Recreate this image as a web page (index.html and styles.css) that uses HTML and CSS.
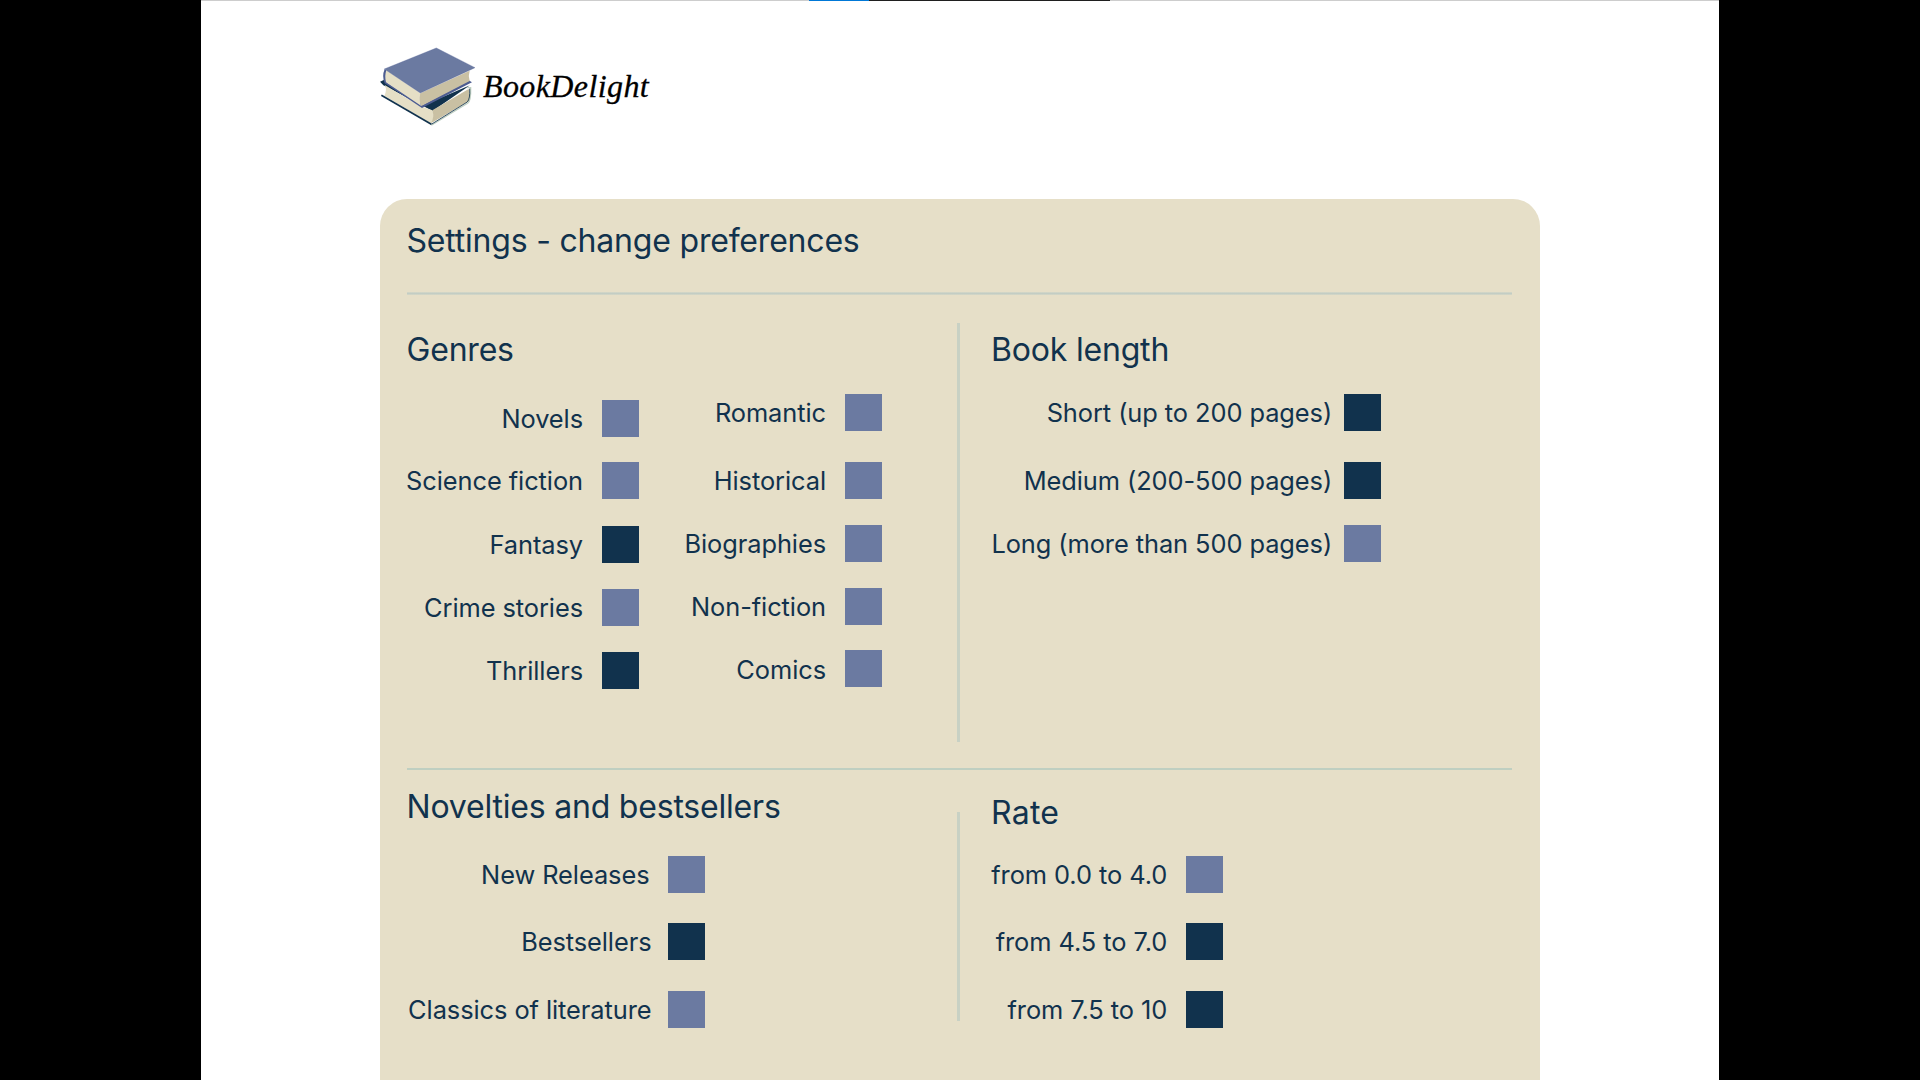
FILE: index.html
```html
<!DOCTYPE html>
<html lang="en">
<head>
<meta charset="utf-8">
<title>BookDelight - Settings</title>
<link rel="stylesheet" href="styles.css">
</head>
<body>
<div class="page">
  <div class="loading"><span class="loading-active"></span><span class="loading-rest"></span></div>
  <header class="brand">
    <svg class="brand-logo" viewBox="24 45 300 250" aria-hidden="true">
      <path fill="#11324d" d="M30 155 L46 148 L52 160 L160 226 L300 166 L188 243 L40 166 Z"/>
      <path fill="#e5dfc6" d="M44 165 Q52 180 43 197 L184 281 Q196 262 187 241 L150 228 Z"/>
      <path fill="#c9c0a3" d="M187 241 L296 177 Q304 196 297 213 L183 280 Q194 262 187 241 Z"/>
      <path fill="none" stroke="#11324d" stroke-width="5" d="M34 196 L184 283"/>
      <path fill="none" stroke="#bfcfc1" stroke-width="4" d="M184 286 L293 220 Q303 213 302 173 L292 173"/>
      <path fill="none" stroke="#11324d" stroke-width="2.5" d="M184 283 L292 216 Q301 206 299 176"/>
      <path fill="#4c5c91" d="M44 117 Q35 138 44 160 L156 234 L306 157 L296 151 L156 226 L50 157 L50 122 Z"/>
      <path fill="#e5dfc6" d="M49 121 Q43 138 48 157 L154 228 Q144 210 151 190 Z"/>
      <path fill="#c9c0a3" d="M151 190 L299 122 Q294 138 299 153 L154 228 Q144 210 151 190 Z"/>
      <path fill="#6b7aa1" stroke="#4c5c91" stroke-width="1" d="M43 117 L199 54 L315 113 L151 189 Z"/>
    </svg>
    <span class="brand-name">BookDelight</span>
  </header>
  <main class="card">
    <h1 class="title">Settings - change preferences</h1>
    <div class="panels panels-upper">
      <section class="panel">
        <h2 class="heading">Genres</h2>
        <div class="genre-columns">
          <ul class="options genres-a">
            <li class="option"><span>Novels</span><i class="box"></i></li>
            <li class="option"><span>Science fiction</span><i class="box"></i></li>
            <li class="option"><span>Fantasy</span><i class="box checked"></i></li>
            <li class="option"><span>Crime stories</span><i class="box"></i></li>
            <li class="option"><span>Thrillers</span><i class="box checked"></i></li>
          </ul>
          <ul class="options genres-b">
            <li class="option"><span>Romantic</span><i class="box"></i></li>
            <li class="option"><span>Historical</span><i class="box"></i></li>
            <li class="option"><span>Biographies</span><i class="box"></i></li>
            <li class="option"><span>Non-fiction</span><i class="box"></i></li>
            <li class="option comics"><span>Comics</span><i class="box"></i></li>
          </ul>
        </div>
      </section>
      <div class="divider"></div>
      <section class="panel">
        <h2 class="heading">Book length</h2>
        <ul class="options lengths">
          <li class="option"><span>Short (up to 200 pages)</span><i class="box checked"></i></li>
          <li class="option"><span>Medium (200-500 pages)</span><i class="box checked"></i></li>
          <li class="option"><span>Long (more than 500 pages)</span><i class="box"></i></li>
        </ul>
      </section>
    </div>
    <div class="panels panels-lower">
      <section class="panel">
        <h2 class="heading">Novelties and bestsellers</h2>
        <ul class="options novelties">
          <li class="option new"><span>New Releases</span><i class="box"></i></li>
          <li class="option"><span>Bestsellers</span><i class="box checked"></i></li>
          <li class="option"><span>Classics of literature</span><i class="box"></i></li>
        </ul>
      </section>
      <div class="divider"></div>
      <section class="panel">
        <h2 class="heading rate-heading">Rate</h2>
        <ul class="options rates">
          <li class="option"><span>from 0.0 to 4.0</span><i class="box"></i></li>
          <li class="option"><span>from 4.5 to 7.0</span><i class="box checked"></i></li>
          <li class="option"><span>from 7.5 to 10</span><i class="box checked"></i></li>
        </ul>
      </section>
    </div>
  </main>
</div>
</body>
</html>
```
FILE: styles.css
```css
* { box-sizing: border-box; }

body {
  margin: 0;
  height: 1080px;
  overflow: hidden;
  background: #000;
  color: #11324d;
  font-family: Inter, "Liberation Sans", sans-serif;
  font-weight: 370;
}

h1, h2, ul { margin: 0; padding: 0; font-weight: 370; list-style: none; }

.page {
  width: 1518px;
  height: 1080px;
  margin-left: 201px;
  background: #fff;
  overflow: hidden;
}

.loading { display: flex; height: 1px; padding-left: 608px; background: #cdcdcd; }
.loading-active { width: 60px; background: #0078d7; }
.loading-rest { width: 241px; background: #1f1f1f; }

.brand {
  display: flex;
  height: 197.5px;
  padding: 44px 0 0 177px;
}
.brand-logo { flex: none; width: 100px; height: 83.3px; }
.brand-name {
  margin-left: 5px;
  padding-top: 22px;
  color: #000;
  font: italic 32px/38px "Liberation Serif", serif;
  letter-spacing: 0.4px;
  -webkit-text-stroke: 0.3px #000;
}

.card {
  width: 1160.5px;
  height: 920px;
  margin-left: 178.5px;
  padding: 0 28px 0 27px;
  background: #e6dfc8;
  border-radius: 27px 27px 0 0;
}

.title {
  height: 96px;
  padding-top: 22px;
  background: linear-gradient(#d7d9c8, #c3cdc4, #d7d9c8) bottom / 100% 3px no-repeat;
  font-size: 32px;
  line-height: 39px;
  letter-spacing: -0.2px;
}

.panels { display: grid; grid-template-columns: 550px 3px 1fr; }
.panels-upper { height: 475.5px; padding: 28.5px 0 26px; border-bottom: 2px solid #bfcfc1; }
.panels-lower { height: 251px; }
.divider { width: 3px; background: #c8d1c4; }
.panels-lower .divider { height: 209px; margin-top: 42px; }
.panel:last-child { padding-left: 31.6px; }

.heading {
  height: 39px;
  font-size: 32px;
  line-height: 39px;
  letter-spacing: -0.2px;
  white-space: nowrap;
}
.panels-upper .heading { margin-top: 7px; }
.panels-lower .heading { margin-top: 17px; }
.panels-lower .rate-heading { margin-top: 23px; letter-spacing: 0.2px; }

.genre-columns { display: flex; }
.options { display: flex; flex-direction: column; gap: 26.3px; }
.option {
  display: flex;
  justify-content: flex-end;
  gap: 18.5px;
  height: 37px;
  font-size: 25.4px;
  line-height: 37px;
  letter-spacing: -0.07px;
  white-space: nowrap;
}
.box { flex: none; width: 37px; height: 37px; background: #6b7aa1; }
.box.checked { background: #11324d; }

.genres-a { width: 232px; padding-top: 31px; gap: 26.3px; }
.genres-a .option:first-child { margin-bottom: -1px; }
.genres-b { width: 243px; padding-top: 24.5px; }
.genres-b .option:first-child { margin-bottom: 5px; }
.comics { margin-top: -2px; }
.comics span { padding-top: 1.5px; }
.lengths { width: 389.5px; padding-top: 24.5px; }
.lengths .option { gap: 11.5px; }
.lengths .option:first-child { margin-bottom: 5px; }
.novelties { width: 298px; padding-top: 29.5px; gap: 30.5px; }
.novelties .option { gap: 16px; }
.novelties .new { gap: 18px; }
.rates { width: 231.6px; padding-top: 23.5px; gap: 30.5px; }
```
